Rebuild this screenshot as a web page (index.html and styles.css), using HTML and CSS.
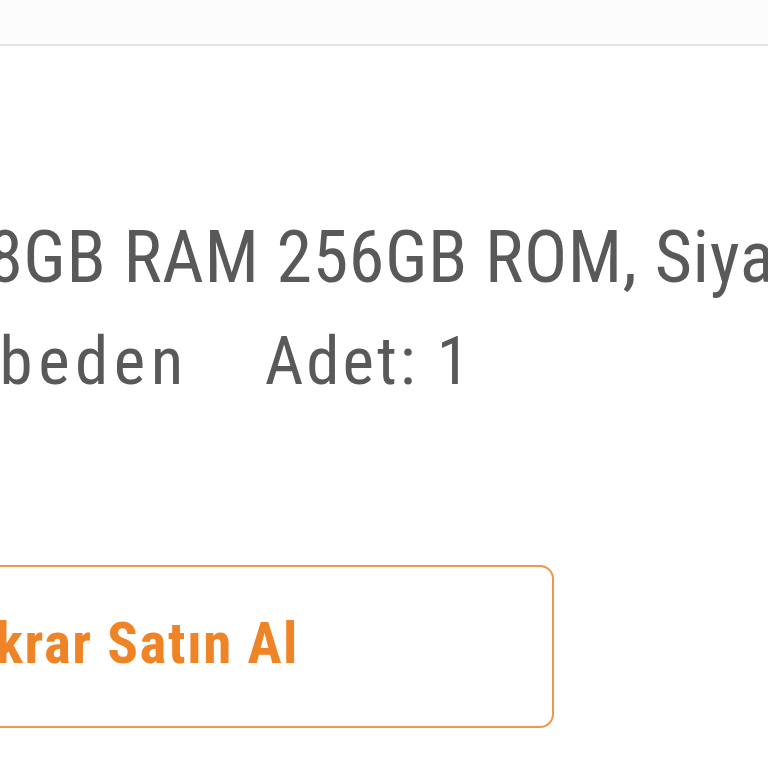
FILE: index.html
```html
<!DOCTYPE html>
<html lang="tr">
<head>
<meta charset="utf-8">
<link rel="stylesheet" href="styles.css">
</head>
<body>
<div class="page">
  <div class="header"></div>
  <div class="item">
    <div class="info">
      <p class="title">Telefon 8GB RAM 256GB ROM, Siyah</p>
      <p class="meta"><span class="size">Tek beden</span><span class="qty">Adet: 1</span></p>
    </div>
    <button class="rebuy">Tekrar Satın Al</button>
  </div>
</div>
</body>
</html>
```
FILE: styles.css
```css
* { box-sizing: border-box; }
html, body { margin: 0; padding: 0; background: #fff; }
body { width: 768px; height: 768px; overflow: hidden; font-family: "Roboto", "Open Sans", sans-serif; font-stretch: condensed; }
.page { width: 768px; }
.header { height: 46px; border-bottom: 2px solid #e4e4e4; background: #fcfcfc; }
.item { margin-left: -200px; padding-top: 162px; }
.info { color: #595959; }
.title { margin: 0; font-size: 72px; line-height: 100px; letter-spacing: 0.6px; text-indent: -46px; white-space: nowrap; }
.meta { margin: 0; font-size: 67px; line-height: 107px; letter-spacing: 3px; text-indent: 69px; white-space: nowrap; }
.size { letter-spacing: 5.5px; }
.qty { margin-left: 76px; }
.rebuy { display: block; margin-top: 150px; width: 754px; height: 163px; border: 2px solid #f0984a; border-radius: 14px; background: #fff; color: #ee8426; font-family: inherit; font-stretch: condensed; font-weight: 700; font-size: 57px; letter-spacing: 1.5px; text-align: left; padding: 0 0 6px 135px; }
```
